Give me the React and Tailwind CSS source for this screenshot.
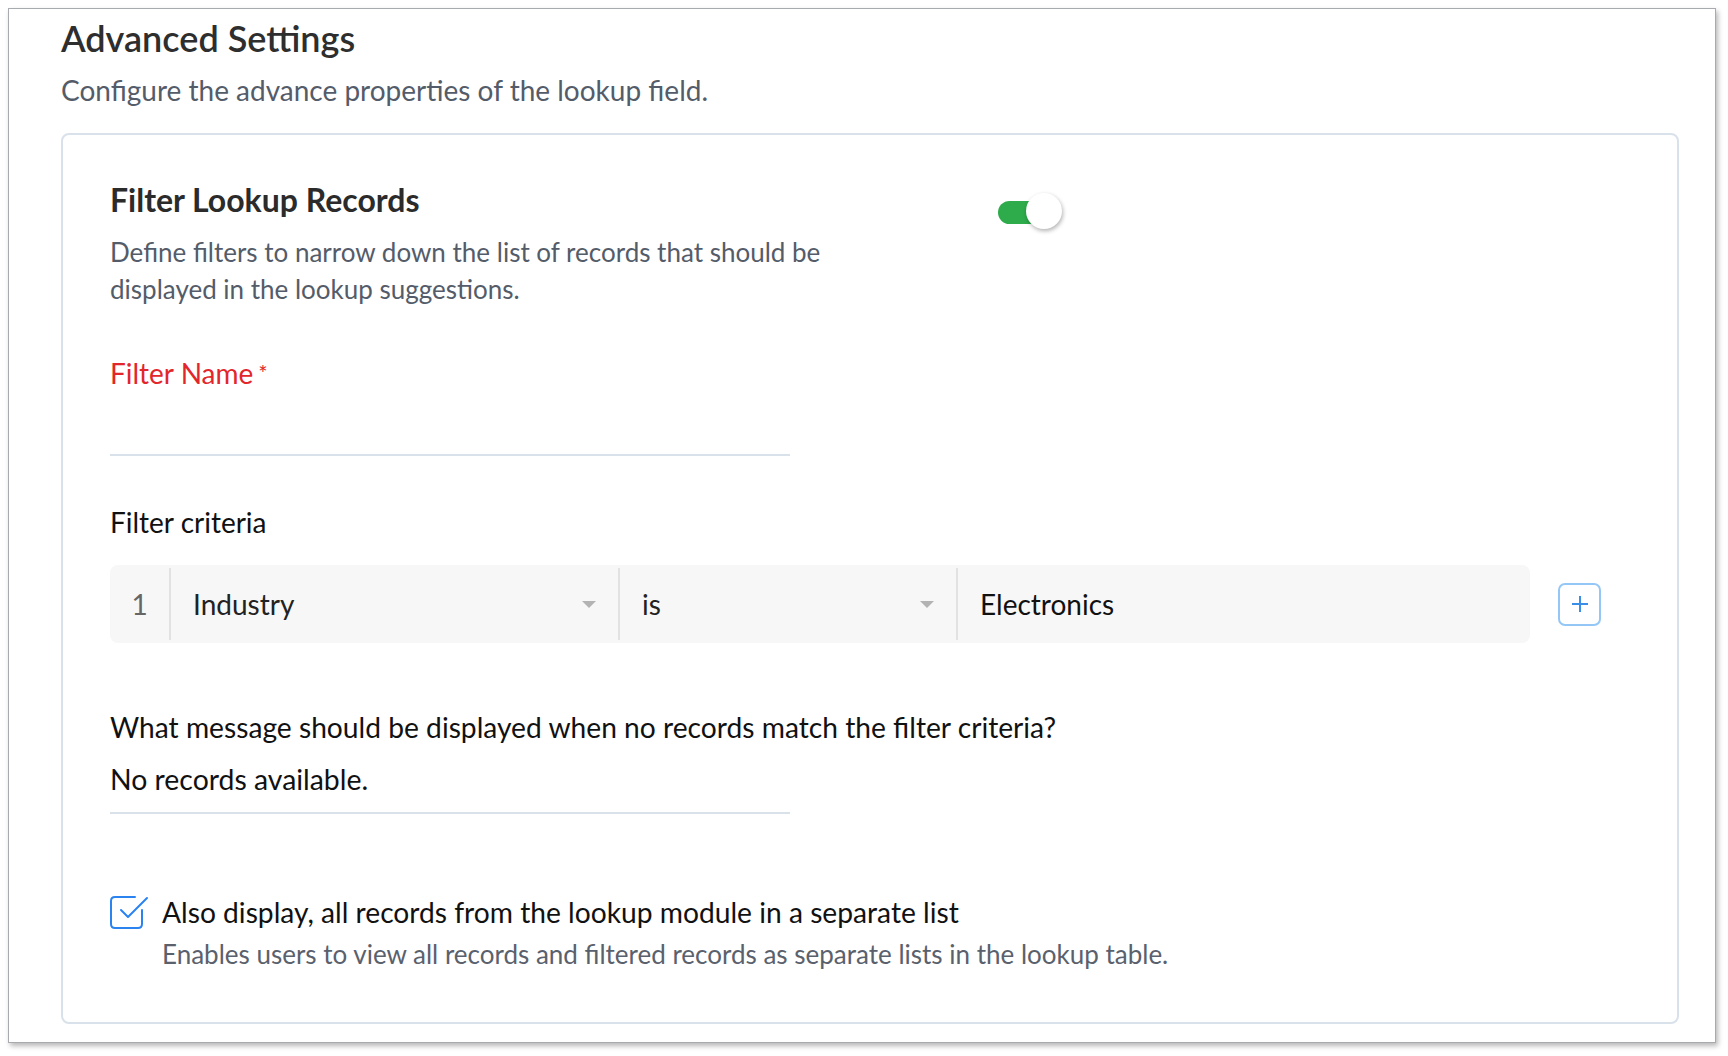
import React from 'react'

const Caret = () => (
    <svg width="14" height="7" viewBox="0 0 14 7" className="shrink-0">
        <path d="M0 0 L14 0 L7 7 Z" fill="#b3b3b3" />
    </svg>
)

const CheckIcon = () => (
    <svg width="40" height="36" viewBox="0 0 40 36" className="shrink-0">
        <path
            d="M25 2 L5 2 Q1 2 1 6 L1 29 Q1 33 5 33 L28 33 Q32 33 32 29 L32 15"
            fill="none"
            stroke="#2b83f0"
            strokeWidth="2"
            strokeLinecap="round"
        />
        <path
            d="M11 15 L18 22 L37 3"
            fill="none"
            stroke="#2b83f0"
            strokeWidth="2"
            strokeLinecap="round"
            strokeLinejoin="round"
        />
    </svg>
)

const App = () => {
    return (
        <div className="w-[1728px] h-[1056px] bg-white pt-[8px] pl-[8px] font-['Lato','Liberation_Sans',sans-serif]">
            <div className="w-[1708px] h-[1035px] bg-white border border-[#a7abaf] shadow-[2px_3px_5px_rgba(0,0,0,0.28)] pl-[52px]">
                {/* Header */}
                <h1 className="mt-[9px] text-[36px] leading-[40px] font-semibold text-[#2e2e2e]">Advanced Settings</h1>
                <p className="mt-[14px] text-[28px] leading-[36px] text-[#545c69]">
                    Configure the advance properties of the lookup field.
                </p>

                {/* Card */}
                <div className="mt-[25px] w-[1618px] h-[891px] border-2 border-[#d9e1eb] rounded-[8px] pl-[47px]">
                    <div className="flex">
                        <div className="w-[887px]">
                            <h2 className="mt-[47px] text-[32px] leading-[36px] font-bold text-[#2b2b2b]">Filter Lookup Records</h2>
                            <p className="mt-[16px] w-[790px] text-[26px] leading-[37px] text-[#545c69]">
                                Define filters to narrow down the list of records that should be displayed in the lookup suggestions.
                            </p>
                        </div>
                        {/* Toggle */}
                        <div className="mt-[57px] relative w-[66px] h-[38px]">
                            <div className="absolute left-[1px] top-[9px] w-[50px] h-[23px] rounded-full bg-[#2eab4b]" />
                            <div className="absolute left-[29px] top-[1px] w-[36px] h-[36px] rounded-full bg-white shadow-[1px_2px_4px_rgba(0,0,0,0.3)]" />
                        </div>
                    </div>

                    {/* Filter name */}
                    <div className="mt-[47px] text-[28px] leading-[36px] text-[#e2262b]">
                        Filter Name<span className="ml-[5px] align-top text-[22px]">*</span>
                    </div>
                    <div className="w-[680px] h-[65px] border-b-2 border-[#d9e1eb]" />

                    {/* Criteria */}
                    <div className="mt-[48px] text-[28px] leading-[36px] text-[#111]">Filter criteria</div>
                    <div className="mt-[25px] flex items-center gap-[28px]">
                        <div className="w-[1420px] h-[78px] bg-[#f7f7f7] rounded-[8px] flex items-stretch text-[28px] text-[#222]">
                            <div className="w-[61px] flex items-center justify-center text-[#666] border-r-2 border-[#e2e2e2] my-[3px]">1</div>
                            <div className="w-[449px] flex items-center justify-between pl-[22px] pr-[22px] border-r-2 border-[#e2e2e2] my-[3px]">
                                <span>Industry</span>
                                <Caret />
                            </div>
                            <div className="w-[338px] flex items-center justify-between pl-[22px] pr-[22px] border-r-2 border-[#e2e2e2] my-[3px]">
                                <span>is</span>
                                <Caret />
                            </div>
                            <div className="flex-1 flex items-center pl-[22px] text-[#111]">Electronics</div>
                        </div>
                        <button className="w-[43px] h-[43px] rounded-[7px] border-2 border-[#95c7f6] flex items-center justify-center">
                            <svg width="18" height="18" viewBox="0 0 18 18">
                                <path d="M9 1 V17 M1 9 H17" stroke="#3a8ee8" strokeWidth="2" />
                            </svg>
                        </button>
                    </div>

                    {/* Empty message */}
                    <div className="mt-[66px] text-[28.2px] leading-[36px] text-[#111]">
                        What message should be displayed when no records match the filter criteria?
                    </div>
                    <div className="mt-[16px] w-[680px] pb-[15px] border-b-2 border-[#d9e1eb] text-[28.4px] leading-[36px] text-[#111]">
                        No records available.
                    </div>

                    {/* Checkbox */}
                    <div className="mt-[81px] flex items-start gap-[12px]">
                        <CheckIcon />
                        <div>
                            <div className="-mt-[1px] text-[28.2px] leading-[36px] text-[#111]">
                                Also display, all records from the lookup module in a separate list
                            </div>
                            <div className="mt-[6px] text-[26px] leading-[36px] text-[#5a616d]">
                                Enables users to view all records and filtered records as separate lists in the lookup table.
                            </div>
                        </div>
                    </div>
                </div>
            </div>
        </div>
    )
}

export default App
